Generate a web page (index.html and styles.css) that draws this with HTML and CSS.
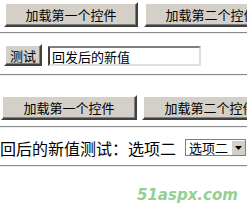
FILE: index.html
```html
<!DOCTYPE html>
<html>
<head>
    <title>控件加载测试</title>
    <link rel="stylesheet" href="styles.css">
</head>
<body>
    <div class="page">
        <div class="row row-top">
            <button class="btn btn-wide">加载第一个控件</button>
            <button class="btn btn-wide">加载第二个控件</button>
        </div>
        <hr class="rule rule-a">

        <div class="row row-test">
            <button class="btn btn-small">测试</button>
            <input class="field" type="text" value="回发后的新值">
        </div>
        <hr class="rule rule-b">

        <div class="row row-second">
            <button class="btn btn-wide2">加载第一个控件</button>
            <button class="btn btn-wide2">加载第二个控件</button>
        </div>
        <hr class="rule rule-c">

        <div class="row row-result">
            <span class="result">回后的新值测试：选项二</span>
            <div class="select">
                <span class="select-text">选项二</span>
                <span class="select-arrow">
                    <svg width="9" height="5" viewBox="0 0 9 5"><path d="M1 0h7L4.5 4z" fill="#000"/></svg>
                </span>
            </div>
        </div>
        <hr class="rule rule-d">

        <div class="watermark">51aspx.com</div>
    </div>
</body>
</html>
```

FILE: styles.css
```css
body {
    margin: 0;
    background: #fff;
    font-family: "Noto Sans CJK SC", "Liberation Sans", sans-serif;
    overflow: hidden;
}
.page {
    position: relative;
    width: 247px;
    height: 222px;
    overflow: hidden;
}
.row {
    display: flex;
    align-items: center;
    white-space: nowrap;
}
.btn {
    box-sizing: border-box;
    background: #d4d0c8;
    color: #000;
    font-family: inherit;
    font-size: 13px;
    line-height: 1;
    padding: 0;
    border: 2px solid;
    border-color: #fff #404040 #404040 #fff;
    box-shadow: inset -1px -1px 0 #808080;
    flex-shrink: 0;
}
.btn-wide {
    width: 134px;
    height: 25px;
}
.btn-wide2 {
    width: 136px;
    height: 25px;
}
.btn-small {
    width: 38px;
    height: 22px;
}
.row-top {
    margin: 2px 0 0 4px;
    gap: 6px;
}
.row-test {
    margin: 10px 0 0 4px;
    gap: 6px;
    align-items: flex-start;
}
.row-second {
    margin: 19px 0 0 1px;
    gap: 5px;
}
.row-result {
    margin: 11px 0 0 0;
    gap: 9px;
}
.field {
    box-sizing: border-box;
    width: 153px;
    height: 20px;
    margin-top: 2px;
    border: 2px solid;
    border-color: #808080 #e0e0e0 #e0e0e0 #404040;
    padding: 0 2px;
    font-family: inherit;
    font-size: 13px;
    color: #000;
    outline: none;
}
.rule {
    border: 0;
    height: 1px;
    background: #8a8a8a;
    border-bottom: 1px solid #eee;
    margin: 0;
}
.rule-a {
    margin-top: 5px;
    width: 247px;
}
.rule-b {
    margin-top: 8px;
}
.rule-c {
    margin-top: 6px;
}
.rule-d {
    margin-top: 9px;
}
.result {
    font-size: 16px;
    line-height: 16px;
    color: #000;
}
.select {
    box-sizing: border-box;
    display: flex;
    align-items: center;
    height: 17px;
    width: 61px;
    border: 1px solid #7f7f7f;
    flex-shrink: 0;
}
.select-text {
    font-size: 13px;
    line-height: 13px;
    padding-left: 3px;
    width: 43px;
}
.select-arrow {
    display: flex;
    align-items: center;
    justify-content: center;
    width: 14px;
    height: 15px;
    background: #d4d0c8;
    border-left: 1px solid #fff;
    border-top: 1px solid #fff;
    box-sizing: border-box;
}
.watermark {
    position: absolute;
    left: 137px;
    top: 186px;
    font-family: "DejaVu Sans", sans-serif;
    font-size: 15px;
    font-weight: bold;
    font-style: italic;
    color: #94cf94;
}
```
